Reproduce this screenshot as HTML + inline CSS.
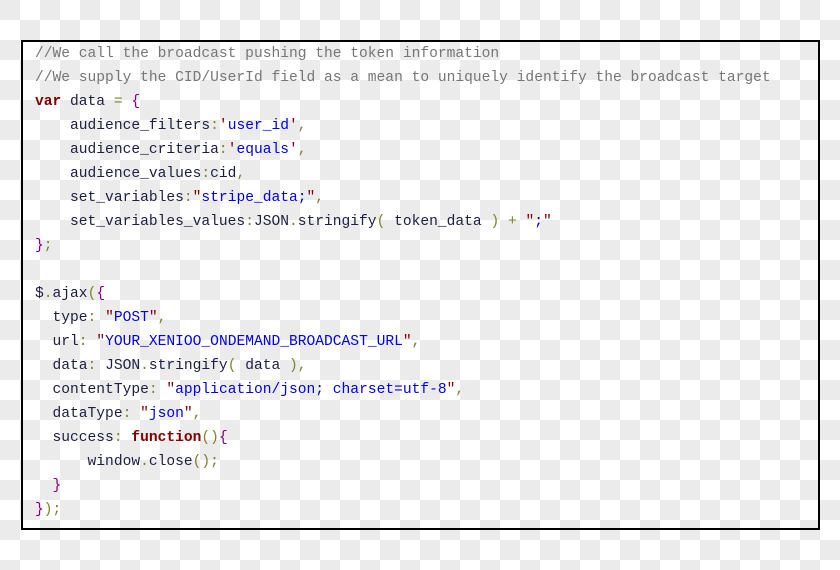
<!DOCTYPE html>
<html><head><meta charset="utf-8"><style>
html,body{margin:0;padding:0}
body{width:840px;height:570px;position:relative;overflow:hidden;
background-color:#fff;
background-image:linear-gradient(45deg,#ebebeb 25%,transparent 25%,transparent 75%,#ebebeb 75%),linear-gradient(45deg,#ebebeb 25%,transparent 25%,transparent 75%,#ebebeb 75%);
background-size:40px 40px;background-position:20px 0,0 20px;}
.box{position:absolute;left:21px;top:40px;width:795px;height:486px;border:2px solid #000;}
pre{position:absolute;left:35px;top:42px;margin:0;font-family:"Liberation Mono",monospace;font-size:14.6px;line-height:24px;color:#1e1e40}
.c{color:#767676}.k{color:#800000;font-weight:bold}.s{color:#0000e6}.q{color:#800000}.b{color:#800080}.p{color:#808030}
</style></head><body>
<div class="box"></div>
<pre><span class="c">//We call the broadcast pushing the token information</span>
<span class="c">//We supply the CID/UserId field as a mean to uniquely identify the broadcast target</span>
<span class="k">var</span> data <span class="p">=</span> <span class="b">{</span>
    audience_filters<span class="p">:</span><span class="q">'</span><span class="s">user_id</span><span class="q">'</span><span class="p">,</span>
    audience_criteria<span class="p">:</span><span class="q">'</span><span class="s">equals</span><span class="q">'</span><span class="p">,</span>
    audience_values<span class="p">:</span>cid<span class="p">,</span>
    set_variables<span class="p">:</span><span class="q">"</span><span class="s">stripe_data;</span><span class="q">"</span><span class="p">,</span>
    set_variables_values<span class="p">:</span>JSON<span class="p">.</span>stringify<span class="p">(</span> token_data <span class="p">)</span> <span class="p">+</span> <span class="q">"</span><span class="s">;</span><span class="q">"</span>
<span class="b">}</span><span class="p">;</span>

$<span class="p">.</span>ajax<span class="p">(</span><span class="b">{</span>
  type<span class="p">:</span> <span class="q">"</span><span class="s">POST</span><span class="q">"</span><span class="p">,</span>
  url<span class="p">:</span> <span class="q">"</span><span class="s">YOUR_XENIOO_ONDEMAND_BROADCAST_URL</span><span class="q">"</span><span class="p">,</span>
  data<span class="p">:</span> JSON<span class="p">.</span>stringify<span class="p">(</span> data <span class="p">),</span>
  contentType<span class="p">:</span> <span class="q">"</span><span class="s">application/json; charset=utf-8</span><span class="q">"</span><span class="p">,</span>
  dataType<span class="p">:</span> <span class="q">"</span><span class="s">json</span><span class="q">"</span><span class="p">,</span>
  success<span class="p">:</span> <span class="k">function</span><span class="p">()</span><span class="b">{</span>
      window<span class="p">.</span>close<span class="p">();</span>
  <span class="b">}</span>
<span class="b">}</span><span class="p">);</span></pre>
</body></html>
